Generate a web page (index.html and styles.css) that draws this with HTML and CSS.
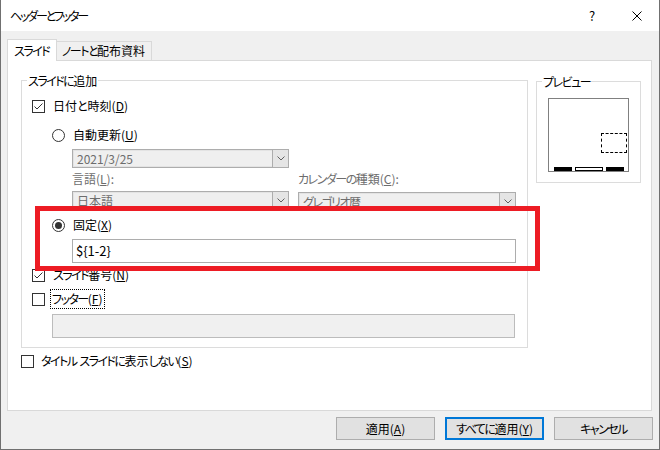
FILE: index.html
```html
<!DOCTYPE html>
<html lang="ja">
<head>
<meta charset="utf-8">
<title>ヘッダーとフッター</title>
<link rel="stylesheet" href="styles.css">
</head>
<body>
<div class="window">
  <div class="titlebar">
    <span class="title"><span class="kt">ヘッダーとフッター</span></span>
    <span class="help">?</span>
    <span class="close"><svg width="10" height="10" viewBox="0 0 10 10"><path d="M0.5 0.5L9.5 9.5M9.5 0.5L0.5 9.5" stroke="#000" stroke-width="1" fill="none"/></svg></span>
  </div>
  <div class="main">
    <div class="tabs">
      <div class="tab active"><span class="k">スライド</span></div>
      <div class="tab"><span class="k">ノートと</span>配布資料</div>
    </div>
    <div class="panel">
      <div class="left">
        <fieldset class="group">
          <legend><span class="k">スライドに</span>追加</legend>
          <div class="group-body">
            <div class="row">
              <span class="cb"><svg width="11" height="11" viewBox="0 0 11 11"><polyline points="1.5,5.5 4,8 9.5,2.5" fill="none" stroke="#333" stroke-width="1"/></svg></span>
              <span>日付と時刻(<u>D</u>)</span>
            </div>
            <div class="row ind1 mt9">
              <span class="radio"></span>
              <span>自動更新(<u>U</u>)</span>
            </div>
            <div class="auto-grid ind2">
              <div class="combo r1">
                <span class="combo-text">2021/3/25</span>
                <span class="combo-btn"><svg width="8" height="5" viewBox="0 0 8 5"><polyline points="0.5,0.5 4,4 7.5,0.5" fill="none" stroke="#606060" stroke-width="1"/></svg></span>
              </div>
              <div class="r1"></div>
              <div class="lbl">言語(<u>L</u>):</div>
              <div class="lbl"><span class="k">カレンダーの</span>種類(<u>C</u>):</div>
              <div class="combo r3">
                <span class="combo-text">日本語</span>
                <span class="combo-btn"><svg width="8" height="5" viewBox="0 0 8 5"><polyline points="0.5,0.5 4,4 7.5,0.5" fill="none" stroke="#606060" stroke-width="1"/></svg></span>
              </div>
              <div class="combo r3 cal">
                <span class="combo-text"><span class="k">グレゴリオ</span>暦</span>
                <span class="combo-btn"><svg width="8" height="5" viewBox="0 0 8 5"><polyline points="0.5,0.5 4,4 7.5,0.5" fill="none" stroke="#606060" stroke-width="1"/></svg></span>
              </div>
            </div>
            <div class="row ind1 mt4">
              <span class="radio on"></span>
              <span>固定(<u>X</u>)</span>
            </div>
            <div class="field fixed ind2">${1-2}</div>
            <div class="row mt2">
              <span class="cb"><svg width="11" height="11" viewBox="0 0 11 11"><polyline points="1.5,5.5 4,8 9.5,2.5" fill="none" stroke="#333" stroke-width="1"/></svg></span>
              <span><span class="k">スライド</span>番号(<u>N</u>)</span>
            </div>
            <div class="row mt4">
              <span class="cb"></span>
              <span class="focus"><span class="k">フッター</span>(<u>F</u>)</span>
            </div>
            <div class="field footer ind1"></div>
          </div>
        </fieldset>
        <div class="row title-row">
          <span class="cb"></span>
          <span><span class="k">タイトル</span> <span class="k">スライドに</span>表示<span class="k">しない</span>(<u>S</u>)</span>
        </div>
      </div>
      <fieldset class="preview">
        <legend><span class="k">プレビュー</span></legend>
        <div class="slide">
          <div class="ph"></div>
          <div class="bars">
            <span class="bar"></span>
            <span class="bar hollow"></span>
            <span class="bar"></span>
          </div>
        </div>
      </fieldset>
      <div class="highlight"></div>
    </div>
    <div class="buttons">
      <button class="btn">適用(<u>A</u>)</button>
      <button class="btn default"><span class="k">すべてに</span>適用(<u>Y</u>)</button>
      <button class="btn"><span class="k">キャンセル</span></button>
    </div>
  </div>
</div>
</body>
</html>
```
FILE: styles.css
```css
body {
  margin: 0;
  font-family: "Noto Sans CJK JP", "Noto Sans", sans-serif;
  font-size: 12px;
  line-height: 16px;
  color: #000;
  font-feature-settings: "palt" 1;
}

.k {
  letter-spacing: -1.5px;
}

.kt {
  letter-spacing: -2.2px;
}

.window {
  width: 660px;
  height: 450px;
  box-sizing: border-box;
  border: 1px solid #707070;
  border-top: none;
  background: #f0f0f0;
  display: flex;
  flex-direction: column;
}

.titlebar {
  height: 31px;
  background: #fff;
  display: flex;
  align-items: center;
  padding: 0 17px 0 9px;
}

.title {
  flex: 1;
}

.help {
  width: 14px;
  text-align: center;
  font-size: 13px;
  margin-right: 33px;
}

.close {
  display: flex;
  width: 10px;
  height: 10px;
}

.main {
  flex: 1;
  padding: 8px 7px 0 6px;
  display: flex;
  flex-direction: column;
}

.tabs {
  display: flex;
  align-items: flex-end;
  height: 21px;
}

.tab {
  box-sizing: border-box;
  border: 1px solid #d9d9d9;
  border-bottom: none;
  background: #f0f0f0;
  height: 19px;
  line-height: 18px;
  padding: 0 5px;
  width: 96px;
  margin-left: -1px;
  white-space: nowrap;
}

.tab.active {
  position: relative;
  z-index: 1;
  background: #fff;
  height: 22px;
  line-height: 20px;
  padding: 1px 6px 0;
  width: 50px;
  margin-left: 0;
  margin-bottom: -1px;
}

.panel {
  position: relative;
  box-sizing: border-box;
  height: 351px;
  background: #fff;
  border: 1px solid #d9d9d9;
  display: flex;
  gap: 8px;
  padding: 11px 0 0 13px;
}

.left {
  width: 507px;
}

fieldset {
  margin: 0;
  padding: 0;
  border: 1px solid #dcdcdc;
  min-width: 0;
  box-sizing: border-box;
}

legend {
  margin-left: 5px;
  padding: 0 1px;
  line-height: 17px;
}

.group {
  width: 507px;
}

.group-body {
  padding: 7px 10px 9px 10px;
}

.row {
  display: flex;
  align-items: center;
  height: 20px;
  gap: 8px;
  white-space: nowrap;
}

.ind1 { margin-left: 20px; }
.ind2 { margin-left: 40px; }
.mt9 { margin-top: 9px; }
.mt4 { margin-top: 4px; }
.mt2 { margin-top: 2px; }

.cb {
  width: 13px;
  height: 13px;
  box-sizing: border-box;
  border: 1px solid #333;
  background: #fff;
  display: flex;
  flex: none;
}

.radio {
  width: 13px;
  height: 13px;
  box-sizing: border-box;
  border: 1px solid #333;
  border-radius: 50%;
  background: #fff;
  display: flex;
  align-items: center;
  justify-content: center;
  flex: none;
}

.radio.on::after {
  content: "";
  width: 7px;
  height: 7px;
  border-radius: 50%;
  background: #333;
}

.auto-grid {
  display: grid;
  grid-template-columns: 217px 218px;
  column-gap: 9px;
  margin-top: 4px;
}

.r1 {
  height: 19px;
}

.lbl {
  margin-top: 3px;
  height: 16px;
  color: #6d6d6d;
  white-space: nowrap;
}

.r3 {
  margin-top: 4px;
}

.cal {
  margin-top: 5px;
}

.combo {
  height: 19px;
  box-sizing: border-box;
  border: 1px solid #adadad;
  background: #efefef;
  display: flex;
  color: #6d6d6d;
}

.combo-text {
  flex: 1;
  padding-left: 3px;
  line-height: 17px;
  overflow: hidden;
  white-space: nowrap;
  border: 1px solid #e3e3e3;
  border-right: none;
  line-height: 15px;
}

.combo-btn {
  width: 17px;
  box-sizing: border-box;
  border: 1px solid #adadad;
  border-top: none;
  border-bottom: none;
  margin-right: -1px;
  background: #e5e5e5;
  display: flex;
  align-items: center;
  justify-content: center;
}

.field {
  height: 24px;
  box-sizing: border-box;
  border: 1px solid #adadad;
  line-height: 22px;
  padding-left: 3px;
}

.field.fixed {
  margin-top: 4px;
  width: 444px;
  background: #fff;
  font-size: 13px;
}

.field.footer {
  margin-top: 5px;
  width: 463px;
  background: #f0f0f0;
  border-color: #bcbcbc;
}

.focus {
  border: 1px dotted #000;
  padding: 1px 1px;
  margin-left: -3px;
  line-height: 16px;
}

.title-row {
  margin-top: 3px;
  gap: 7px;
}

.preview {
  width: 105px;
  height: 110px;
  margin-top: 1px;
}

.slide {
  width: 81px;
  height: 74px;
  box-sizing: border-box;
  border: 1px solid #808080;
  margin: 8px auto 0;
  display: flex;
  flex-direction: column;
}

.ph {
  align-self: flex-end;
  width: 26px;
  height: 20px;
  box-sizing: border-box;
  border: 1px dashed #000;
  margin-top: 34px;
  margin-right: 1px;
}

.bars {
  margin-top: auto;
  display: flex;
  justify-content: center;
  gap: 3px;
}

.bar {
  width: 18px;
  height: 4px;
  background: #000;
}

.bar.hollow {
  width: 28px;
  box-sizing: border-box;
  border: 1px solid #000;
  background: #fff;
}

.highlight {
  position: absolute;
  left: 27px;
  top: 145px;
  width: 505px;
  height: 65px;
  box-sizing: border-box;
  border: 5px solid #ed1c24;
}

.buttons {
  display: flex;
  justify-content: flex-end;
  gap: 10px;
  margin-top: 6px;
  margin-right: -1px;
}

.btn {
  width: 99px;
  height: 23px;
  box-sizing: border-box;
  border: 1px solid #adadad;
  background: #e1e1e1;
  font: inherit;
  line-height: 16px;
  color: #000;
  padding: 0;
}

.btn.default {
  border: 2px solid #0078d7;
}
```
